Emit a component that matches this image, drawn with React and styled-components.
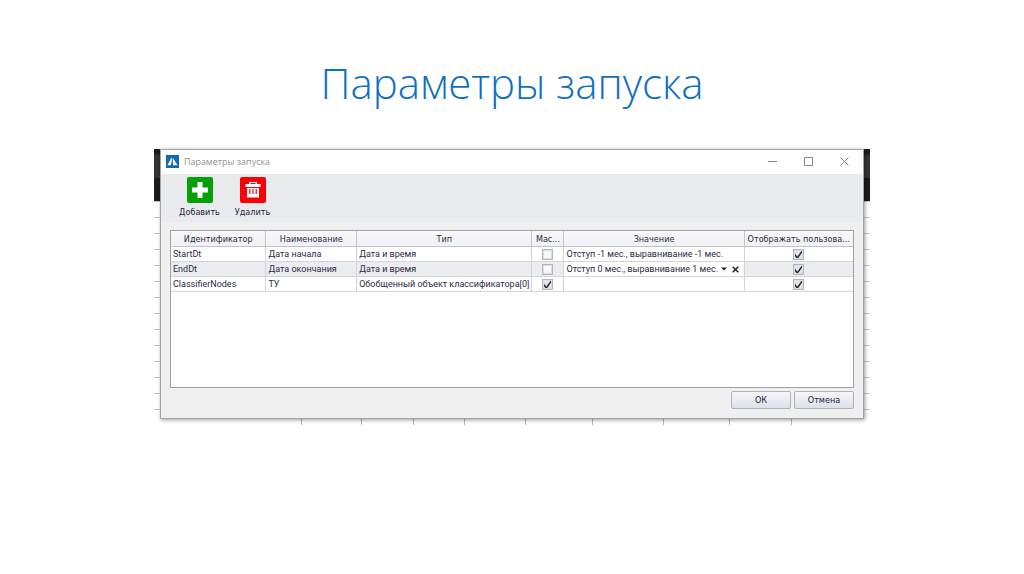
import React from "react";
import styled, { createGlobalStyle, css } from "styled-components";

const GlobalStyle = createGlobalStyle`
  * {
    box-sizing: border-box;
  }
  body {
    margin: 0;
    background: #ffffff;
    font-family: "DejaVu Sans Condensed", "Noto Sans", sans-serif;
  }
`;

const Slide = styled.main`
  padding: 55px 154px 0;
`;

const Title = styled.h1`
  margin: 0 0 38px;
  text-align: center;
  font-family: "Open Sans", sans-serif;
  font-size: 42px;
  font-weight: 300;
  line-height: 56px;
  color: #0f70c0;
`;

const Backdrop = styled.div`
  padding: 0 6px;
  background:
    linear-gradient(#1d1d1f 6px, #343436 6px, #343436 29px, #1b1b1d 29px) top / 100% 52px no-repeat,
    repeating-linear-gradient(#ffffff 0 4px, #c9c9c9 4px 5px, #ffffff 5px 16px);
`;

const Window = styled.section`
  position: relative;
  border: 1px solid #a3a3a5;
  background: #efefef;
  box-shadow: 1px 1px 4px rgba(0, 0, 0, 0.4);
`;

const TitleBar = styled.header`
  display: flex;
  align-items: center;
  height: 24px;
  padding: 0 1px 1px 5px;
  background: #ffffff;
`;

const WindowTitle = styled.h2`
  flex: 1;
  margin: 0;
  padding-left: 5px;
  font-family: "Open Sans", sans-serif;
  font-size: 9px;
  font-weight: 400;
  line-height: 14px;
  color: #929292;
`;

const WindowButton = styled.button`
  display: flex;
  align-items: center;
  justify-content: center;
  width: 36px;
  height: 22px;
  padding: 0;
  border: none;
  background: none;
`;

const Toolbar = styled.div`
  display: flex;
  gap: 6px;
  height: 48px;
  padding: 3px 15px 0;
  background: #e9eaee;
`;

const ToolButton = styled.button`
  display: flex;
  flex-direction: column;
  align-items: center;
  gap: 2px;
  width: 47px;
  padding: 0;
  border: none;
  background: none;
  font-family: inherit;
  font-size: 9px;
  line-height: 14px;
  color: #23233f;
`;

const GridPanel = styled.div`
  height: 158px;
  margin: 8px 9px 0;
  border: 1px solid #a0a0a6;
  background: #ffffff;
`;

const Grid = styled.table`
  width: 100%;
  table-layout: fixed;
  border-collapse: separate;
  border-spacing: 0;
  font-size: 9px;
  line-height: 14px;
  color: #2b2b45;
`;

const cell = css`
  padding: 0 2px;
  border-right: 1px solid #d3d3d8;
  border-bottom: 1px solid #d3d3d8;
  white-space: nowrap;
  &:last-child {
    border-right: none;
  }
`;

const HeadCell = styled.th`
  ${cell}
  height: 16px;
  border-color: #c2c2c9;
  background: linear-gradient(#f8f8fa, #f0f1f4);
  font-weight: 400;
  text-align: center;
`;

const Row = styled.tr`
  background: ${(props) => (props.$selected ? "#ebecef" : "#ffffff")};
`;

const Cell = styled.td`
  ${cell}
  height: 15px;
  font-family: Roboto, sans-serif;
  text-align: ${(props) => (props.$center ? "center" : "left")};
  background: ${(props) => (props.$editing ? "#ffffff" : "transparent")};
`;

const Editor = styled.div`
  display: flex;
  align-items: center;
`;

const EditorText = styled.span`
  flex: 1;
`;

const EditorButton = styled.button`
  display: flex;
  align-items: center;
  justify-content: center;
  width: 12px;
  height: 14px;
  padding: 0;
  border: none;
  background: none;
`;

const Check = styled.input`
  display: block;
  appearance: none;
  width: 11px;
  height: 11px;
  margin: 0 auto;
  border: 1px solid #b4b5bf;
  background: #f8f8fa;
  box-shadow: inset 0 0 0 1px #dcdde3;
  &:checked {
    background: #e3e4ea
      url("data:image/svg+xml,%3Csvg xmlns='http://www.w3.org/2000/svg' viewBox='0 0 11 11'%3E%3Cpath d='M1.500 5.200 4.300 9 10.200.8' fill='none' stroke='%2326263a' stroke-width='1.500'/%3E%3C/svg%3E")
      center / 11px 11px border-box;
  }
`;

const Footer = styled.footer`
  display: flex;
  justify-content: flex-end;
  gap: 3px;
  padding: 3px 9px 9px;
`;

const DialogButton = styled.button`
  width: 60px;
  height: 18px;
  padding: 0;
  border: 1px solid #aeb0ba;
  border-radius: 2px;
  background: linear-gradient(#f6f6f9, #dddfe8);
  font-family: inherit;
  font-size: 9px;
  line-height: 14px;
  color: #23233f;
`;

const SheetEdge = styled.div`
  display: flex;
  height: 6px;
  margin: 0 -6px;
  background: #ffffff;
`;

const SheetColumn = styled.span`
  flex: ${(props) => props.$size};
  border-right: 1px solid #b4b4b6;
  &:last-child {
    border-right: none;
  }
`;

const columns = [
  { title: "Идентификатор", width: "14%" },
  { title: "Наименование", width: "13.3%" },
  { title: "Тип", width: "25.7%" },
  { title: "Мас...", width: "4.7%" },
  { title: "Значение", width: "26.4%" },
  { title: "Отображать пользова...", width: "15.9%" },
];

const parameters = [
  { id: "StartDt", name: "Дата начала", type: "Дата и время", array: false, value: "Отступ -1 мес., выравнивание -1 мес." },
  { id: "EndDt", name: "Дата окончания", type: "Дата и время", array: false, value: "Отступ 0 мес., выравнивание 1 мес.", editing: true },
  { id: "ClassifierNodes", name: "ТУ", type: "Обобщенный объект классификатора[0]", array: true, value: "" },
];

const sheetColumns = [149, 60, 51, 51, 61, 66, 71, 66, 62, 79];

const AppIcon = () => (
  <svg width="13" height="13" viewBox="0 0 14 14">
    <path fill="#1269b3" d="M0 0h14v14H0z" />
    <path fill="#fff" d="M1.500 11 5.800 3l.7 1.300L5.400 11zM7.200 3 12.500 11H7.600z" />
  </svg>
);

const AddIcon = () => (
  <svg width="26" height="26" viewBox="0 0 26 26">
    <rect width="26" height="26" rx="2" fill="#05a005" />
    <path fill="#fff" d="M10.500 5h5v5.500H21v5h-5.500V21h-5v-5.500H5v-5h5.500z" />
  </svg>
);

const DeleteIcon = () => (
  <svg width="26" height="26" viewBox="0 0 26 26">
    <rect width="26" height="26" rx="2" fill="#fb0007" />
    <path fill="#fff" fillRule="evenodd" d="M9 5h8v2h3.500v3h-15V7H9zm1.500 1v1h5V6z" />
    <path fill="#fff" d="M7 11h12v9.500H7z" />
    <path stroke="#fb0007" strokeWidth="1.200" d="M9.800 12v5M13 12v5M16.200 12v5" />
  </svg>
);

const App = () => {
  return (
    <>
      <GlobalStyle />
      <Slide>
        <Title>Параметры запуска</Title>
        <Backdrop>
          <Window>
            <TitleBar>
              <AppIcon />
              <WindowTitle>Параметры запуска</WindowTitle>
              <WindowButton aria-label="Свернуть">
                <svg width="9" height="9" viewBox="0 0 9 9" stroke="#888">
                  <path d="M0 4.500h9" />
                </svg>
              </WindowButton>
              <WindowButton aria-label="Развернуть">
                <svg width="9" height="9" viewBox="0 0 9 9" stroke="#888" fill="none">
                  <path d="M.5.5h8v8h-8z" />
                </svg>
              </WindowButton>
              <WindowButton aria-label="Закрыть">
                <svg width="9" height="9" viewBox="0 0 9 9" stroke="#888">
                  <path d="M.5.5l8 8M8.500.5l-8 8" />
                </svg>
              </WindowButton>
            </TitleBar>
            <Toolbar>
              <ToolButton>
                <AddIcon />
                Добавить
              </ToolButton>
              <ToolButton>
                <DeleteIcon />
                Удалить
              </ToolButton>
            </Toolbar>
            <GridPanel>
              <Grid>
                <colgroup>
                  {columns.map((column) => (
                    <col key={column.title} width={column.width} />
                  ))}
                </colgroup>
                <thead>
                  <tr>
                    {columns.map((column) => (
                      <HeadCell key={column.title}>{column.title}</HeadCell>
                    ))}
                  </tr>
                </thead>
                <tbody>
                  {parameters.map((item) => (
                    <Row key={item.id} $selected={item.editing}>
                      <Cell>{item.id}</Cell>
                      <Cell>{item.name}</Cell>
                      <Cell>{item.type}</Cell>
                      <Cell $center>
                        <Check type="checkbox" defaultChecked={item.array} aria-label="Массив значений" />
                      </Cell>
                      <Cell $editing={item.editing}>
                        <Editor>
                          <EditorText>{item.value}</EditorText>
                          {item.editing && (
                            <>
                              <EditorButton aria-label="Выбрать">
                                <svg width="6" height="4" viewBox="0 0 6 4">
                                  <path d="M0 .5h6L3 3.500z" fill="#222" />
                                </svg>
                              </EditorButton>
                              <EditorButton aria-label="Очистить">
                                <svg width="7" height="7" viewBox="0 0 7 7">
                                  <path d="M.7.7l5.600 5.600M6.300.7.7 6.300" stroke="#222" strokeWidth="1.500" />
                                </svg>
                              </EditorButton>
                            </>
                          )}
                        </Editor>
                      </Cell>
                      <Cell $center>
                        <Check type="checkbox" defaultChecked aria-label="Отображать пользователю" />
                      </Cell>
                    </Row>
                  ))}
                </tbody>
              </Grid>
            </GridPanel>
            <Footer>
              <DialogButton>ОК</DialogButton>
              <DialogButton>Отмена</DialogButton>
            </Footer>
          </Window>
          <SheetEdge>
            {sheetColumns.map((size, index) => (
              <SheetColumn key={index} $size={size} />
            ))}
          </SheetEdge>
        </Backdrop>
      </Slide>
    </>
  );
};

export default App;
